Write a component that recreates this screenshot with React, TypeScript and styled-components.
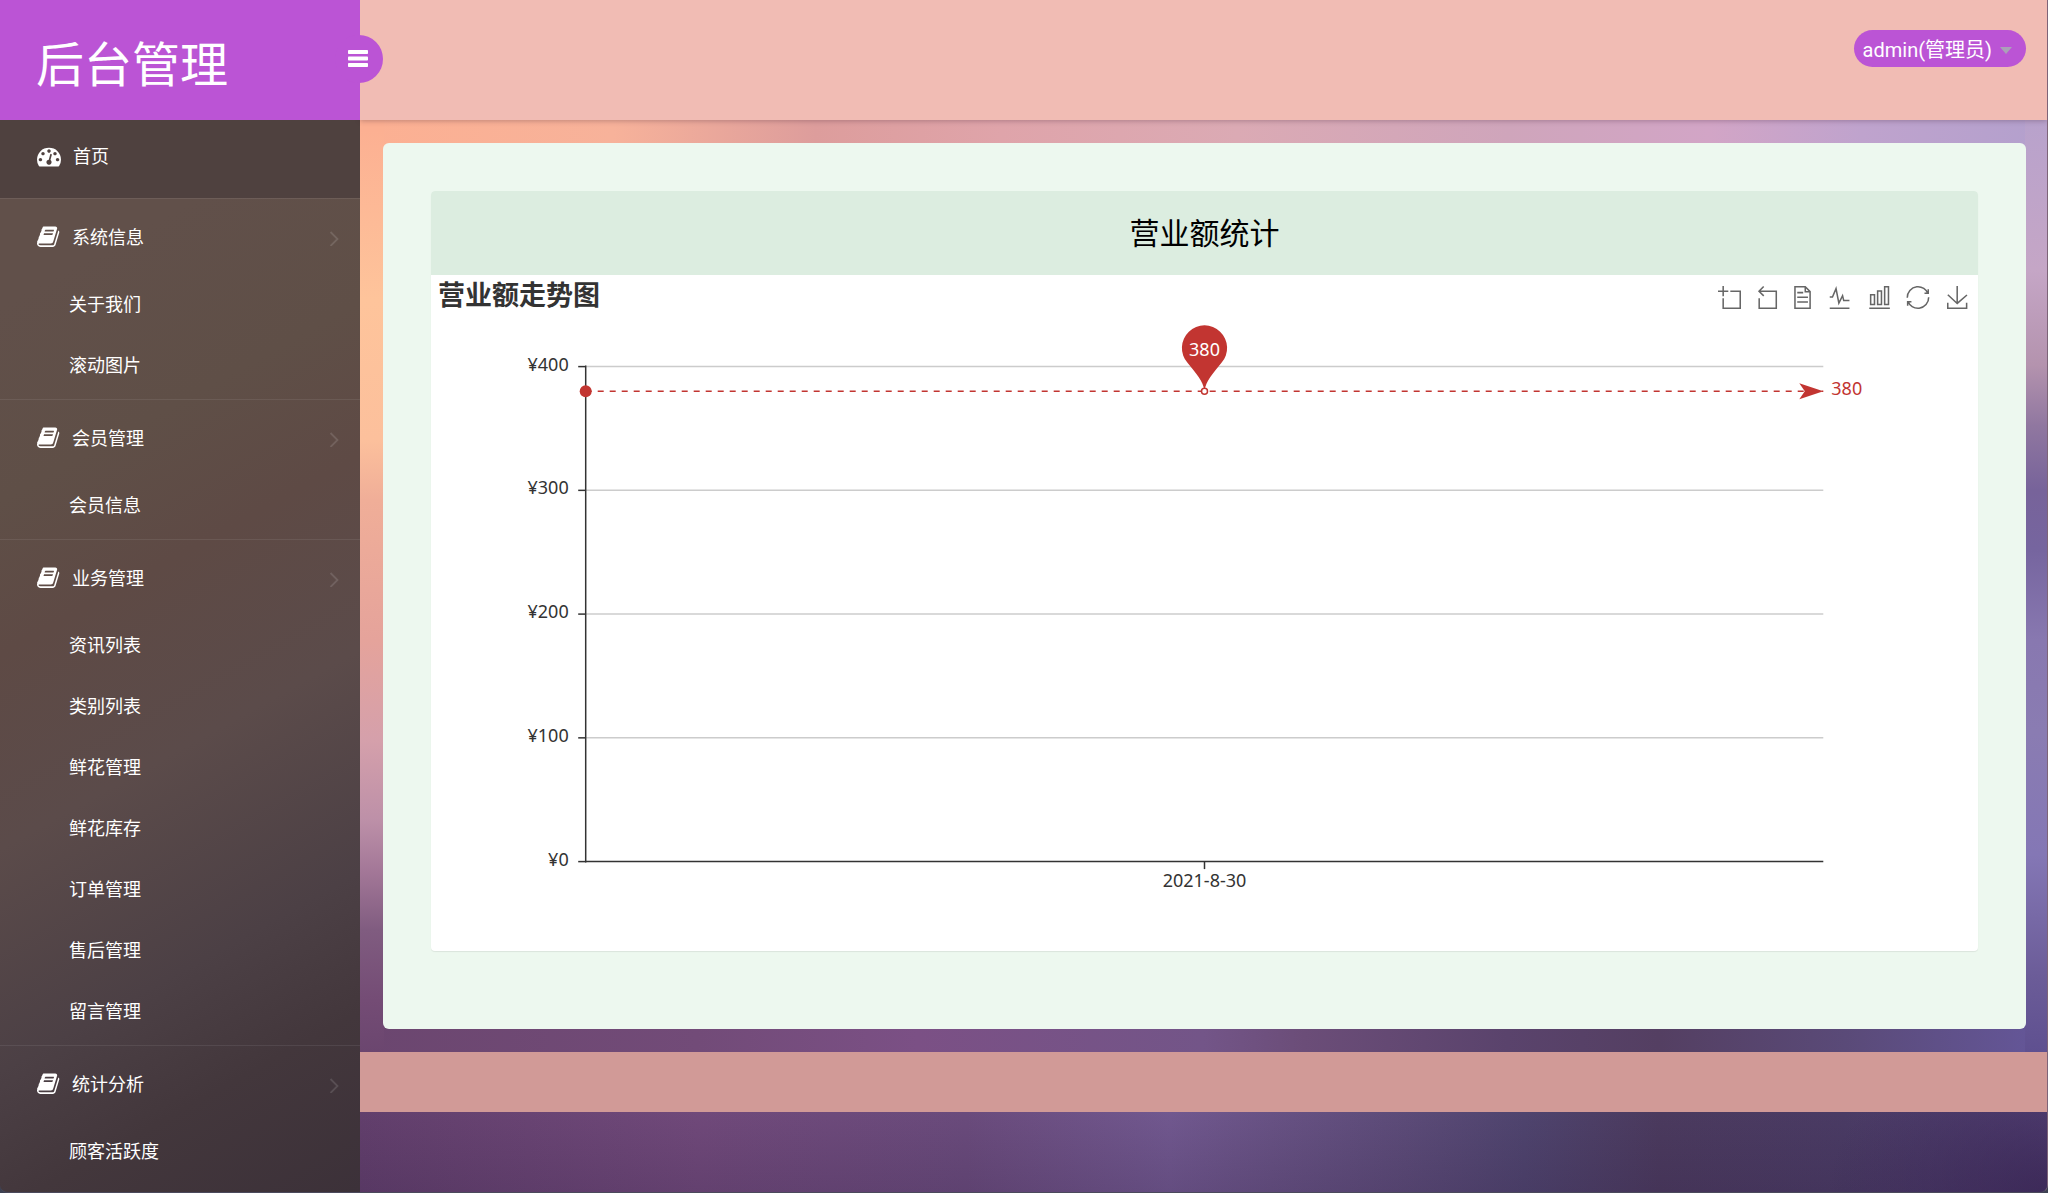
import React from "react";
import styled, { createGlobalStyle } from "styled-components";

const cjk = '"Noto Sans CJK SC", sans-serif';
const accent = "#bb54d5";
const red = "#c23531";

const GlobalStyle = createGlobalStyle`
  * { box-sizing: border-box; }
  body {
    margin: 0;
    background: #3d4152;
    font-family: Roboto, ${cjk};
    font-size: 18px;
  }
  button { font: inherit; border: 0; padding: 0; background: none; cursor: pointer; }
  ul { list-style: none; margin: 0; padding: 0; }
  h1, h2, h3 { margin: 0; }
`;

const Page = styled.div`
  display: grid;
  grid-template-columns: 360px minmax(0, 1fr);
  min-height: 100vh;
  border-right: 1px solid #7d6478;
  border-bottom: 1px solid #4b4a5c;
  border-radius: 0 0 8px 8px;
  overflow: hidden;
`;

const Sidebar = styled.aside`
  display: flex;
  flex-direction: column;
  color: #fff;
  background: linear-gradient(151deg, #61504a 0%, #61504a 22%, #5f4f47 36%, #5e4a45 47%, #5b4b4a 61%, #4c4045 77%, #43373c 87%, #3c3139 100%);
`;

const Brand = styled.div`
  position: relative;
  z-index: 2;
  display: flex;
  align-items: center;
  height: 120px;
  padding: 2px 36px 0;
  background: ${accent};
`;

const BrandName = styled.h1`
  font-family: ${cjk};
  font-size: 48px;
  line-height: 72px;
  font-weight: 400;
`;

const Toggle = styled.button`
  position: absolute;
  top: 35px;
  right: -23px;
  display: flex;
  align-items: center;
  justify-content: center;
  width: 48px;
  height: 48px;
  padding: 0 2px 2px 0;
  border-radius: 50%;
  background: ${accent};
  color: #fff;
`;

const HomeLink = styled.a`
  display: flex;
  align-items: center;
  gap: 12px;
  height: 78px;
  padding: 0 22px 5px 37px;
  color: #fff;
  text-decoration: none;
  line-height: 24px;
  background: #4f413f;
`;

const Group = styled.section`
  padding-bottom: 3px;
  border-top: 1px solid rgba(255, 255, 255, 0.08);
`;

const GroupButton = styled.button`
  display: flex;
  align-items: center;
  gap: 11px;
  width: 100%;
  height: 75px;
  padding: 3px 21px 0 37px;
  color: #fff;
  line-height: 24px;
  text-align: left;
  svg:last-child { margin-left: auto; }
`;

const SubLink = styled.a`
  display: flex;
  align-items: center;
  height: 61px;
  padding-left: 69px;
  color: #fff;
  text-decoration: none;
  line-height: 24px;
`;

const Main = styled.div`
  display: flex;
  flex-direction: column;
  min-width: 0;
  background:
    linear-gradient(#b8a2cc 120px, #c5a6c6 270px, #b493ae 365px, #9077a0 426px, #77639a 490px, #76659f 550px, #8878b0 640px, #8a7cb2 732px, #8477b5 855px, #6b5c98 977px, #5f5090 1052px) right top / 22px 1052px no-repeat,
    linear-gradient(#fcb092 130px, #fec49b 300px, #fcc09c 440px, #f0ae98 500px, #e5a39b 640px, #d5a0ab 740px, #bd90a8 820px, #a47898 870px, #805c80 930px, #744c75 1000px, #6b466f 1052px) left top / 24px 1052px no-repeat,
    linear-gradient(90deg, #fcb092, #f7b29a 15%, #dd9d9c 27%, #dfa4aa 38%, #dbaab4 52%, #cfa5bb 68%, #d2a5c6 80%, #bfa3cd 89%, #b3a0cd) left top / 100% 160px no-repeat,
    linear-gradient(90deg, #6b466f, #724b78 20%, #7b5085 33%, #735588 50%, #6b4d78 56%, #5a436c 68%, #543f62 77%, #5a4a78 88%, #65579a) left 900px / 100% 180px no-repeat,
    radial-gradient(ellipse at 100% 1193px, rgba(50, 30, 75, 0.6), rgba(50, 30, 75, 0) 220px),
    linear-gradient(rgba(40, 25, 60, 0) 1112px, rgba(40, 25, 60, 0.18) 1193px),
    linear-gradient(90deg, #623f6c, #70497a 20%, #6a4b7c 36%, #71588f 48%, #685284 54%, #5c4b78 62%, #4f446e 69%, #4b3a5e 77%, #4a3b64 88%, #554378);
`;

const TopBar = styled.header`
  position: relative;
  display: flex;
  align-items: flex-start;
  justify-content: flex-end;
  height: 120px;
  padding: 30px 21px;
  background: #f1bcb4;
  box-shadow: 0 1px 5px rgba(60, 30, 50, 0.3);
`;

const UserButton = styled.button`
  display: flex;
  align-items: center;
  gap: 8px;
  height: 37px;
  padding: 3px 14px 0 9px;
  border-radius: 19px;
  background: ${accent};
  color: #fff;
  font-size: 20px;
  line-height: 28px;
`;

const Content = styled.main`
  padding: 23px 21px 23px 23px;
`;

const Panel = styled.div`
  padding: 48px 48px 78px;
  border-radius: 6px;
  background: #edf8ef;
`;

const Card = styled.section`
  border-radius: 4px;
  overflow: hidden;
  background: #fff;
  box-shadow: 0 1px 1px rgba(0, 0, 0, 0.08);
`;

const CardTitle = styled.h2`
  padding: 16px 18px 20px;
  background: #dcede0;
  color: #000;
  font-family: ${cjk};
  font-size: 30px;
  line-height: 48px;
  font-weight: 400;
  text-align: center;
`;

const ChartHead = styled.div`
  display: flex;
  align-items: flex-start;
  justify-content: space-between;
  height: 48px;
  padding: 0 9px 0 7px;
`;

const ChartTitle = styled.h3`
  color: #333;
  font-family: ${cjk};
  font-size: 27px;
  line-height: 38px;
  font-weight: 700;
`;

const Toolbox = styled.div`
  display: flex;
  gap: 15px;
  padding-top: 11px;
`;

const Tool = styled.button`
  display: flex;
  width: 23px;
  height: 23px;
  svg {
    overflow: visible;
    fill: none;
    stroke: #666;
    stroke-width: 4;
  }
`;

const Plot = styled.svg`
  display: block;
  width: 100%;
  height: 628px;
  overflow: visible;
  font-family: "Noto Sans", sans-serif;
  font-size: 18px;
`;

const Footer = styled.footer`
  height: 60px;
  background: #d19a97;
`;

const DashIcon = () => (
  <svg width="24" height="24" viewBox="0 60 1792 1792" fill="currentColor" aria-hidden="true">
    <path d="M384 1152q0-53-37.500-90.500t-90.500-37.500-90.500 37.500-37.500 90.500 37.500 90.500 90.500 37.500 90.500-37.500 37.500-90.500zm192-448q0-53-37.500-90.500t-90.500-37.500-90.500 37.500-37.500 90.500 37.500 90.500 90.500 37.500 90.500-37.500 37.500-90.500zm428 481l101-382q6-26-7.500-48.500t-38.500-29.500-48 6.500-30 39.500l-101 382q-60 5-107 43.500t-63 98.500q-20 77 20 146t117 89 146-20 89-117q16-60-6-117t-72-91zm660-33q0-53-37.500-90.500t-90.500-37.500-90.500 37.500-37.500 90.500 37.500 90.500 90.500 37.500 90.500-37.500 37.500-90.500zm-640-640q0-53-37.500-90.500t-90.500-37.500-90.500 37.500-37.500 90.500 37.500 90.500 90.500 37.500 90.500-37.500 37.500-90.500zm448 192q0-53-37.500-90.500t-90.500-37.500-90.500 37.500-37.500 90.500 37.500 90.500 90.500 37.500 90.500-37.500 37.500-90.500zm320 448q0 261-141 483-19 29-54 29h-1402q-35 0-54-29-141-221-141-483 0-182 71-348t191-286 286-191 348-71 348 71 286 191 191 286 71 348z" />
  </svg>
);

const BookIcon = () => (
  <svg width="24" height="24" viewBox="0 100 1792 1792" fill="currentColor" aria-hidden="true">
    <path d="M1639 478q40 57 18 129l-275 906q-19 64-76.500 107.500t-122.500 43.500h-923q-77 0-148.500-53.500t-99.500-131.500q-24-67-2-127 0-4 3-27t4-37q1-8-3-21.500t-3-19.500q2-11 8-21t16.500-23.500 16.500-23.500q23-38 45-91.500t30-91.500q3-10 .5-30t-.5-28q3-11 17-28t17-23q21-36 42-92t25-90q1-9-2.500-32t.5-28q4-13 22-30.500t22-22.500q19-26 42.500-84.500t27.500-96.500q1-8-3-25.500t-2-26.500q2-8 9-18t18-23 17-21q8-12 16.500-30.500t15-35 16-36 19.500-32 26.500-23.500 36-11.500 47.500 5.500l-1 3q38-9 51-9h761q74 0 114 56t18 130l-274 906q-36 119-71.500 153.500t-128.500 34.500h-869q-27 0-38 15-11 16-1 43 24 70 144 70h923q29 0 56-15.500t35-41.500l300-987q7-22 5-57 38 15 59 43zm-1064 2q-4 13 2 22.500t20 9.500h608q13 0 25.500-9.500t16.500-22.500l21-64q4-13-2-22.500t-20-9.500h-608q-13 0-25.500 9.500t-16.500 22.500zm-83 256q-4 13 2 22.500t20 9.500h608q13 0 25.500-9.500t16.500-22.500l21-64q4-13-2-22.500t-20-9.500h-608q-13 0-25.500 9.500t-16.500 22.500z" />
  </svg>
);

const ChevronIcon = () => (
  <svg width="10" height="16" viewBox="0 0 10 16" fill="none" stroke="#fff" strokeOpacity="0.13" strokeWidth="1.8" aria-hidden="true">
    <path d="M1.500 2 8.500 9 1.500 16" />
  </svg>
);

const groups = [
  { title: "系统信息", items: ["关于我们", "滚动图片"] },
  { title: "会员管理", items: ["会员信息"] },
  { title: "业务管理", items: ["资讯列表", "类别列表", "鲜花管理", "鲜花库存", "订单管理", "售后管理", "留言管理"] },
  { title: "统计分析", items: ["顾客活跃度"] },
];

const tools = [
  { name: "区域缩放", box: "0 0 60 60", d: "M0,13.5h26.9 M13.5,26.9V0 M32.1,13.5H58V58H13.5 V32.1" },
  { name: "区域缩放还原", box: "2 0 60 60", d: "M22,1.4L9.9,13.5l12.3,12.3 M10.3,13.5H54.9v44.6 H10.3v-26" },
  { name: "数据视图", box: "9 0 60 60", d: "M17.5,17.3H33 M45.4,29.5h-28 M11.5,2v56H51V14.8L38.4,2H11.5z M38.4,2.2v12.7H51 M45.4,41.7h-28" },
  { name: "切换为折线图", box: "10 0 60 60", d: "M4.1,28.9h7.1l9.3-22l7.4,38l9.7-19.7l3,12.8h14.9M4.1,58h51.4" },
  { name: "切换为柱状图", box: "5 0 60 60", d: "M6.7,22.9h10V48h-10V22.9zM24.9,13h10v35h-10V13zM43.2,2h10v46h-10V2zM3.1,58h53.7" },
  { name: "还原", box: "4 0 60 60", d: "M47,18.9h9.8V8.7 M56.3,20.1 C52.1,9,40.5,0.6,26.8,2.1C12.6,3.7,1.6,16.2,2.1,30.6 M13,41.1H3.1v10.2 M3.7,39.9c4.2,11.1,15.8,19.5,29.5,18 c14.2-1.6,25.2-14.1,24.7-28.5" },
  { name: "保存为图片", box: "0 0 60 60", d: "M4.7,22.9L29.3,45.5L54.7,23.4M4.6,43.6L4.6,58L53.8,58L53.8,43.6M29.2,45.1L29.2,0" },
];

const BASE_Y = 538.6;
const STEP = 123.75;
const yOf = (v: number) => BASE_Y - (v / 100) * STEP;

function RevenueChart({ date, value }: { date: string; value: number }) {
  const y = yOf(value);
  return (
    <Plot role="img" aria-label="营业额走势图">
      {[0, 100, 200, 300, 400].map((v) => (
        <g key={v}>
          {v > 0 && <line x1="10%" x2="90%" y1={yOf(v)} y2={yOf(v)} stroke="#ccc" strokeWidth="1.5" />}
          <svg x="10%" y={yOf(v)} overflow="visible">
            <line x1="-7.5" x2="0" y1="0" y2="0" stroke="#333" strokeWidth="1.5" />
            <text x="-17" y="4" textAnchor="end" fill="#333">{`¥${v}`}</text>
          </svg>
        </g>
      ))}
      <line x1="10%" x2="10%" y1={yOf(400) - 1} y2={BASE_Y + 1} stroke="#333" strokeWidth="1.5" />
      <line x1="10%" x2="90%" y1={BASE_Y} y2={BASE_Y} stroke="#333" strokeWidth="1.5" />
      <svg x="50%" y={BASE_Y} overflow="visible">
        <line x1="0" x2="0" y1="0" y2="7.5" stroke="#333" strokeWidth="1.5" />
        <text x="0" y="25" textAnchor="middle" fill="#333">{date}</text>
      </svg>
      <line x1="10%" x2="90%" y1={y} y2={y} stroke={red} strokeWidth="1.5" strokeDasharray="6 6" />
      <svg x="10%" y={y} overflow="visible">
        <circle r="6" fill={red} />
      </svg>
      <svg x="90%" y={y} overflow="visible">
        <path d="M0 0 -24 8 -18.500 0 -24 -8Z" fill={red} />
        <text x="8" y="4" fill={red}>{value}</text>
      </svg>
      <svg x="50%" y={y} overflow="visible">
        <path d="M0 0C-1.500 -11 -8 -17 -17 -28.500A22.600 22.600 0 1 1 17 -28.500C8 -17 1.500 -11 0 0Z" fill={red} />
        <circle r="3" fill="#fff" stroke={red} strokeWidth="1.5" />
        <text x="0" y="-35" textAnchor="middle" fill="#fff">{value}</text>
      </svg>
    </Plot>
  );
}

export default function App() {
  return (
    <>
      <GlobalStyle />
      <Page>
        <Sidebar>
          <Brand>
            <BrandName>后台管理</BrandName>
            <Toggle aria-label="切换菜单">
              <svg width="20" height="17" viewBox="0 0 20 17" fill="currentColor" aria-hidden="true">
                <rect width="20" height="4" rx="0.8" />
                <rect y="6.500" width="20" height="4" rx="0.8" />
                <rect y="13" width="20" height="4" rx="0.8" />
              </svg>
            </Toggle>
          </Brand>
          <nav>
            <HomeLink href="#home">
              <DashIcon />
              首页
            </HomeLink>
            {groups.map((g) => (
              <Group key={g.title}>
                <GroupButton>
                  <BookIcon />
                  {g.title}
                  <ChevronIcon />
                </GroupButton>
                <ul>
                  {g.items.map((item) => (
                    <li key={item}>
                      <SubLink href={`#${item}`}>{item}</SubLink>
                    </li>
                  ))}
                </ul>
              </Group>
            ))}
          </nav>
        </Sidebar>
        <Main>
          <TopBar>
            <UserButton>
              admin(管理员)
              <svg width="12" height="7" viewBox="0 0 12 7" fill="#aba0b8" aria-hidden="true">
                <path d="M0 0H12L6 7Z" />
              </svg>
            </UserButton>
          </TopBar>
          <Content>
            <Panel>
              <Card>
                <CardTitle>营业额统计</CardTitle>
                <ChartHead>
                  <ChartTitle>营业额走势图</ChartTitle>
                  <Toolbox>
                    {tools.map((t) => (
                      <Tool key={t.name} aria-label={t.name}>
                        <svg width="23" height="23" viewBox={t.box} aria-hidden="true">
                          <path d={t.d} />
                        </svg>
                      </Tool>
                    ))}
                  </Toolbox>
                </ChartHead>
                <RevenueChart date="2021-8-30" value={380} />
              </Card>
            </Panel>
          </Content>
          <Footer />
        </Main>
      </Page>
    </>
  );
}
